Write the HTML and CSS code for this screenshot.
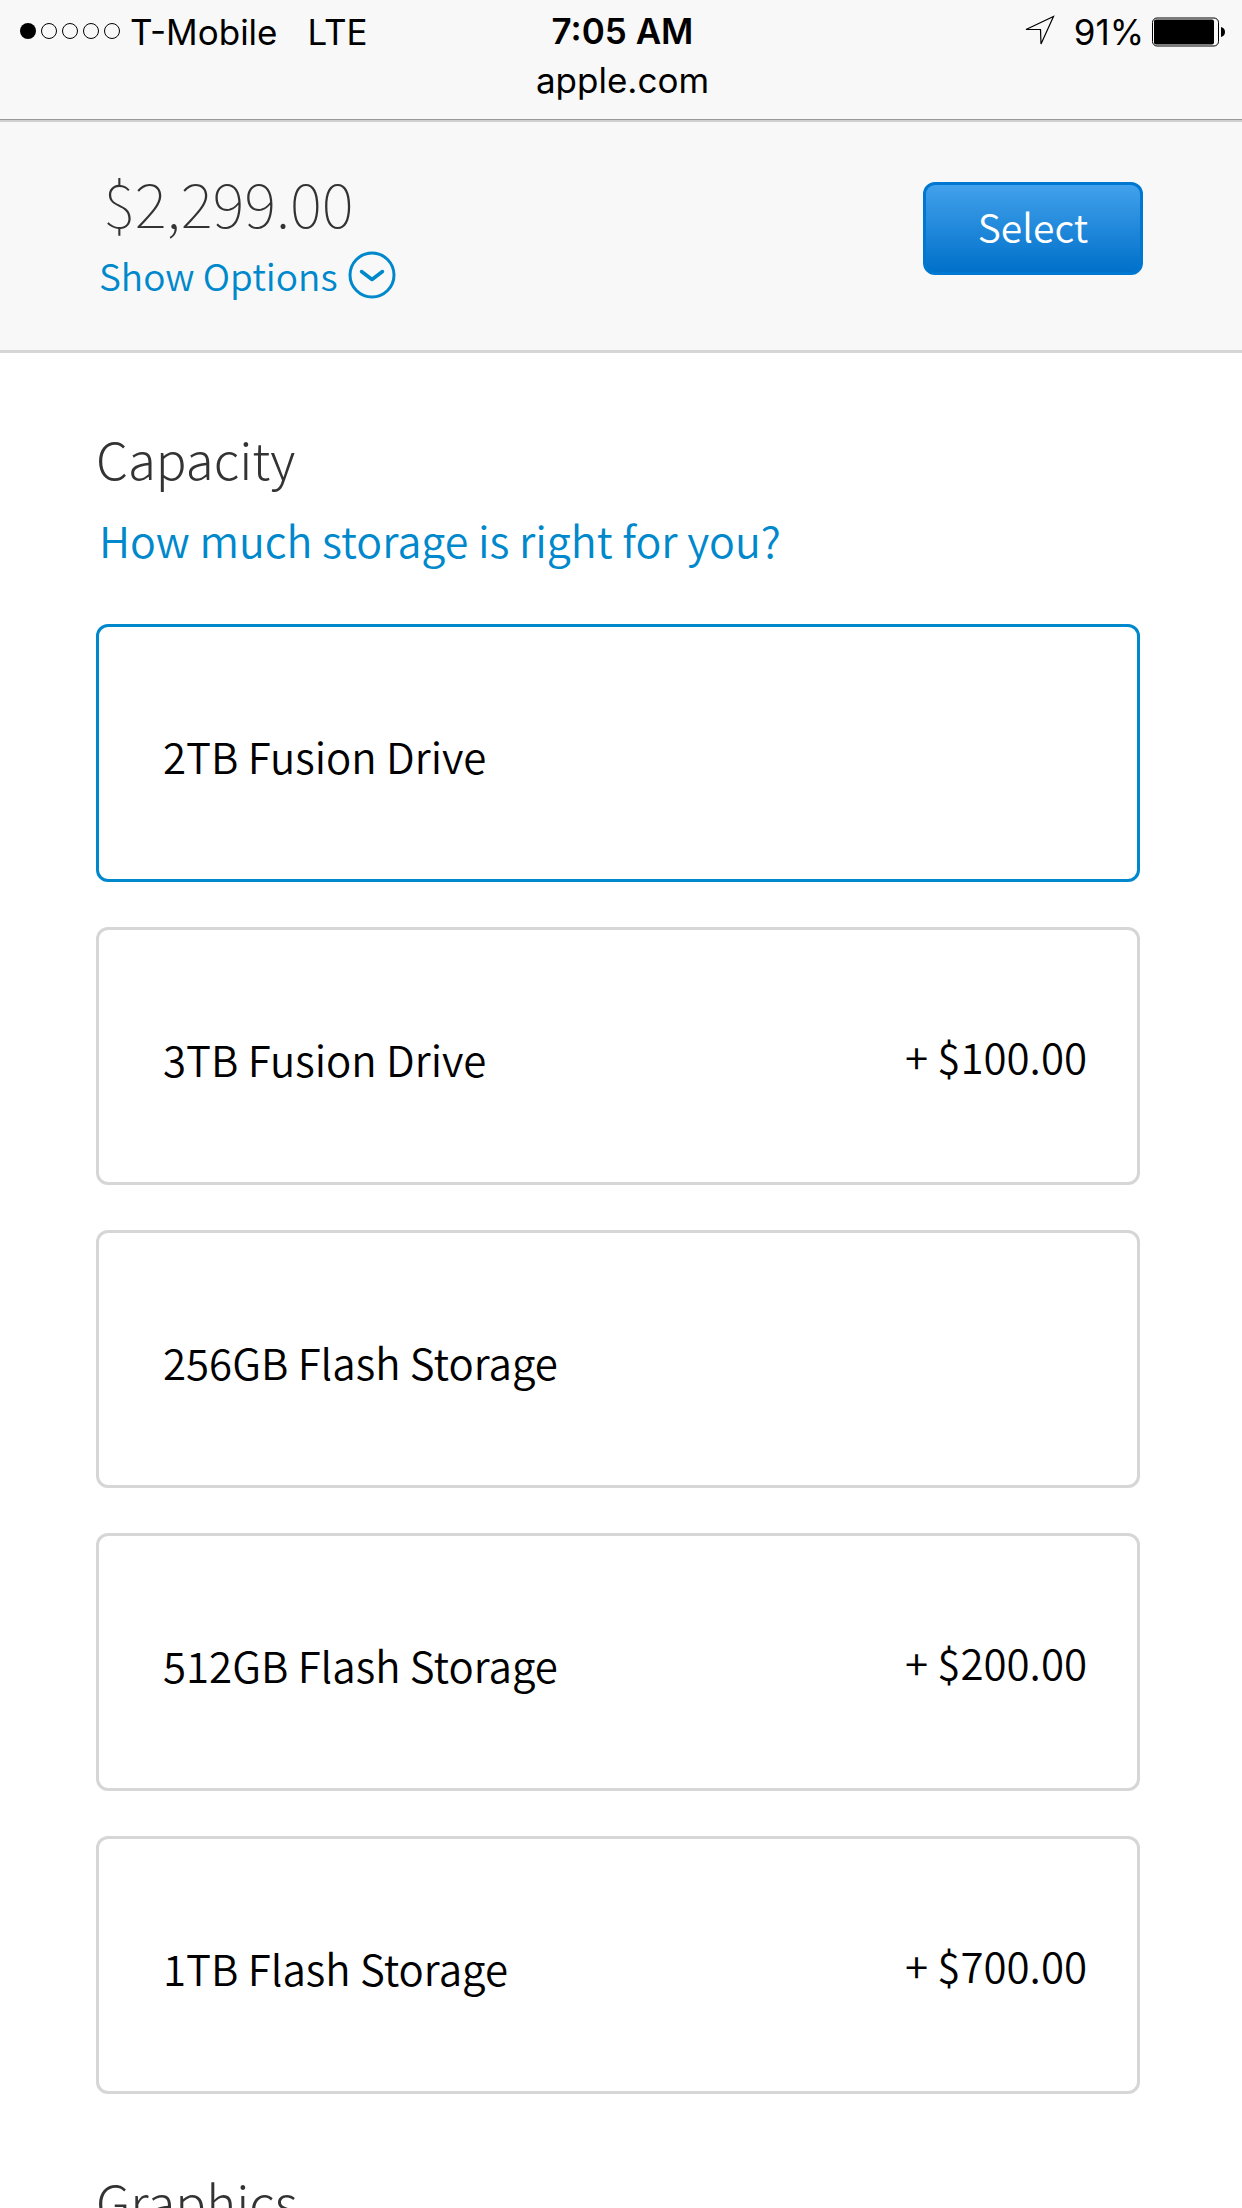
FILE: index.html
```
<!DOCTYPE html>
<html lang="en">
  <head>
    <meta charset="UTF-8">
    <meta name="viewport" content="width=device-width">
    <title>Configure - apple.com</title>
    <link rel="stylesheet" href="styles.css">
  </head>
  <body>
    <div class="browser-bar">
      <div class="status">
        <div class="status-left">
          <svg class="signal" width="101" height="18" viewBox="0 0 101 18" aria-hidden="true">
            <circle cx="9" cy="9" r="8"/>
            <g fill="none" stroke="#000">
              <circle cx="30" cy="9" r="7.5"/>
              <circle cx="51" cy="9" r="7.5"/>
              <circle cx="72" cy="9" r="7.5"/>
              <circle cx="93" cy="9" r="7.5"/>
            </g>
          </svg>
          <span class="carrier">T-Mobile</span>
          <span>LTE</span>
        </div>
        <div class="time">7:05 AM</div>
        <div class="status-right">
          <svg class="location" width="32" height="32" viewBox="0 0 32 32" aria-hidden="true">
            <path d="M2 14.5 L29.500 1.500 L17 29 L16.500 14.500 Z" fill="none" stroke="#000" stroke-width="1.200"/>
          </svg>
          <span>91%</span>
          <svg class="battery" width="74" height="30" viewBox="0 0 74 30" aria-hidden="true">
            <rect x=".5" y="1" width="66" height="28" rx="4.500" fill="none" stroke="#000"/>
            <rect x="2" y="2.500" width="60" height="25" rx="2"/>
            <path d="M69 10 Q73 11 73 15 Q73 19 69 20 Z"/>
          </svg>
        </div>
      </div>
      <div class="address">apple.com</div>
    </div>

    <header class="summary">
      <div>
        <div class="total">$2,299.00</div>
        <a class="show-options" href="#options">Show Options
          <svg width="48" height="48" viewBox="0 0 48 48" fill="none" stroke="#0088cc" aria-hidden="true">
            <circle cx="24" cy="24" r="22" stroke-width="3"/>
            <path d="M13.500 20.500 L24 28.500 L34.500 20.500" stroke-width="3.500" stroke-linecap="round" stroke-linejoin="round"/>
          </svg>
        </a>
      </div>
      <button class="select" type="button">Select</button>
    </header>

    <main id="options">
      <h2>Capacity</h2>
      <a class="help" href="#storage">How much storage is right for you?</a>

      <div class="choices">
        <label class="choice"><input type="radio" name="capacity" checked>
          <span>2TB Fusion Drive</span></label>
        <label class="choice"><input type="radio" name="capacity">
          <span>3TB Fusion Drive</span> <span class="price">+ $100.00</span></label>
        <label class="choice"><input type="radio" name="capacity">
          <span>256GB Flash Storage</span></label>
        <label class="choice"><input type="radio" name="capacity">
          <span>512GB Flash Storage</span> <span class="price">+ $200.00</span></label>
        <label class="choice"><input type="radio" name="capacity">
          <span>1TB Flash Storage</span> <span class="price">+ $700.00</span></label>
      </div>

      <h2>Graphics</h2>
    </main>
  </body>
</html>
```
FILE: styles.css
```
* { box-sizing: border-box; }
html { background-color: white; }
body { margin: 0; color: black; font-family: "Noto Sans CJK SC", "Open Sans", sans-serif;
       font-size: 42px; font-weight: 350; line-height: 60px; overflow-x: hidden; }

a { color: #0088cc; text-decoration: none; }
h2 { margin: 0; color: #333; font-size: 51px; font-weight: 300; line-height: 72px; }

.browser-bar { height: 122px; padding: 7px 16px 0 19px; background-color: #f8f8f8;
               border-bottom: 2px solid #d0d0d0; box-shadow: inset 0 -1px #999;
               font-family: Inter, sans-serif; font-size: 35px; font-weight: 400; line-height: 48px; }
.status { display: grid; grid-template-columns: 1fr auto 1fr; height: 49px; }
.status-left, .status-right { display: flex; align-items: center; }
.status-left { gap: 10px; }
.status-right { justify-content: flex-end; gap: 8px; }
.signal { margin-top: -2px; }
.carrier { margin-right: 20px; }
.location { margin-right: 10px; margin-top: -2px; }
.time { font-weight: 600; }
.address { text-align: center; }

.summary { display: flex; justify-content: space-between; align-items: flex-start;
           height: 231px; padding: 48px 99px 0 99px; background-color: #f8f8f8;
           border-bottom: 3px solid #d6d6d6; }
.total { padding-left: 4px; color: #333; font-size: 61px; font-weight: 100; line-height: 64px; }
.show-options { display: flex; align-items: center; gap: 10px; margin-top: 11px;
                font-size: 37px; }
.select { margin-top: 12px; width: 220px; height: 93px; padding: 0 0 6px; color: white;
          font: inherit; font-size: 39px; border: 3px solid #0077d0; border-radius: 12px;
          background: linear-gradient(#42a1ec, #0070c9); }

main { padding: 69px 102px 0 96px; }
.help { display: block; margin-top: 15px; padding-left: 3px; font-size: 43px; }

.choices { display: grid; gap: 45px; margin: 55px 0 71px; }
.choice { display: flex; align-items: center; justify-content: space-between; height: 258px;
          padding: 6px 50px 0 64px; border: 3px solid #d6d6d6; border-radius: 12px; }
.choice:has(:checked) { border-color: #0088cc; }
.choice input { position: absolute; opacity: 0; }
.price { padding-bottom: 6px; }
```
